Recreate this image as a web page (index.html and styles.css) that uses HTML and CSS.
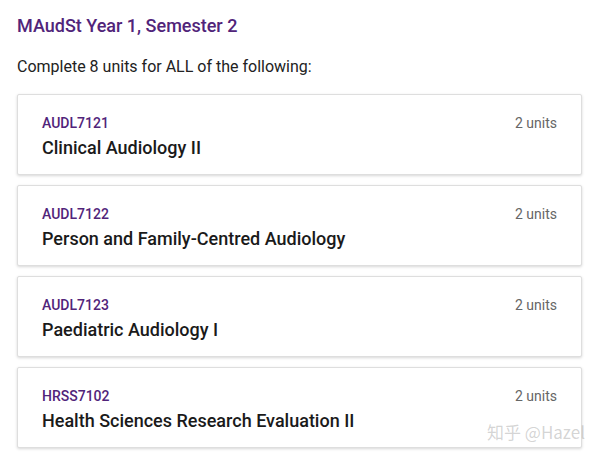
FILE: index.html
```html
<!DOCTYPE html>
<html>
<head>
<meta charset="utf-8">
<link rel="stylesheet" href="styles.css">
</head>
<body>
<main class="page">
  <h2 class="title">MAudSt Year 1, Semester 2</h2>
  <p class="intro">Complete 8 units for ALL of the following:</p>
  <ul class="units">
    <li class="card">
      <div class="info">
        <div class="code">AUDL7121</div>
        <div class="name">Clinical Audiology II</div>
      </div>
      <div class="credits">2 units</div>
    </li>
    <li class="card">
      <div class="info">
        <div class="code">AUDL7122</div>
        <div class="name">Person and Family-Centred Audiology</div>
      </div>
      <div class="credits">2 units</div>
    </li>
    <li class="card">
      <div class="info">
        <div class="code">AUDL7123</div>
        <div class="name">Paediatric Audiology I</div>
      </div>
      <div class="credits">2 units</div>
    </li>
    <li class="card">
      <div class="info">
        <div class="code">HRSS7102</div>
        <div class="name">Health Sciences Research Evaluation II</div>
      </div>
      <div class="credits">2 units</div>
    </li>
  </ul>
  <div class="watermark">知乎 @Hazel</div>
</main>
</body>
</html>
```
FILE: styles.css
```css
* { box-sizing: border-box; }
html, body { margin: 0; padding: 0; background: #fff; }
body { font-family: Roboto, "Noto Sans CJK SC", sans-serif; color: #1e1e1e; }
.page { position: relative; padding: 15px 18px 0 17px; width: 600px; height: 459px; overflow: hidden; }
.title { margin: 0; font-size: 18px; font-weight: 500; color: #51247a; line-height: 22px; }
.intro { margin: 20px 0 0; font-size: 16px; line-height: 20px; color: #222; }
.units { list-style: none; margin: 17px 0 0; padding: 0; display: flex; flex-direction: column; gap: 10px; }
.card { display: flex; justify-content: space-between; align-items: flex-start; height: 81px; padding: 20px 24px 0 24px; border: 1px solid #dedede; border-radius: 2px; box-shadow: 0 1px 3px rgba(0,0,0,0.16); background: #fff; }
.code { font-size: 14px; font-weight: 500; color: #51247a; line-height: 17px; }
.name { margin-top: 5px; font-size: 18px; font-weight: 500; color: #1a1a1a; line-height: 22px; }
.credits { font-size: 14px; color: #666; line-height: 16px; }
.watermark { position: absolute; right: 15px; bottom: 15px; font-size: 17px; color: rgba(160,160,160,0.45); font-family: "Noto Sans CJK SC", Roboto, sans-serif; }
```
